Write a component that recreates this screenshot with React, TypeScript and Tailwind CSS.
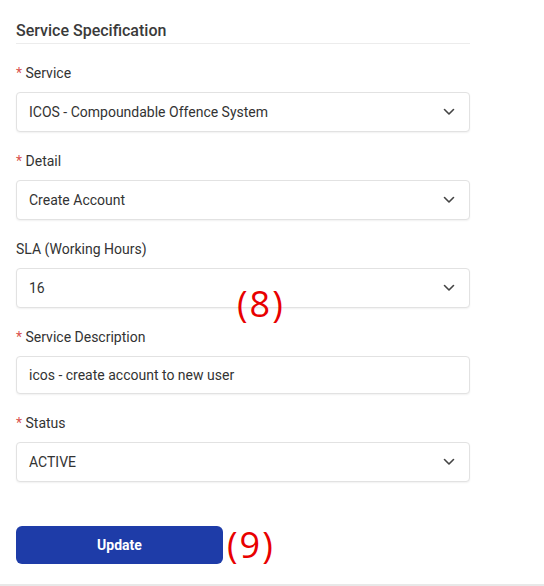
import React from "react";

function Chevron() {
  return (
    <svg width="12" height="8" viewBox="0 0 12 8" fill="none" className="shrink-0">
      <path d="M1.5 1.5L6 6L10.5 1.5" stroke="#444" strokeWidth="1.6" strokeLinecap="round" strokeLinejoin="round" />
    </svg>
  );
}

function Label({ text, required }: { text: string; required?: boolean }) {
  return (
    <div className="h-5 text-[14px] leading-5 text-[#333]">
      {required && <span className="text-[#d9534f]">* </span>}
      {text}
    </div>
  );
}

function SelectBox({ value }: { value: string }) {
  return (
    <div className="mt-[9px] flex h-10 items-center justify-between rounded-[4px] border border-[#e2e2e2] bg-white pl-[12px] pr-[14px] text-[14px] text-[#333] shadow-[0_1px_2px_rgba(0,0,0,0.06)]">
      <span>{value}</span>
      <Chevron />
    </div>
  );
}

export default function App() {
  return (
    <div className="relative h-[586px] w-[544px] bg-white" style={{ fontFamily: "Roboto, 'Noto Sans', sans-serif" }}>
      <div className="w-[470px] pl-4">
        <div className="pt-[21px]">
          <div className="border-b border-[#ececec] pb-[2px] text-[16px] font-medium leading-5 text-[#3a3a3a]">
            Service Specification
          </div>
        </div>
        <div className="pt-[19px]">
          <Label text="Service" required />
          <SelectBox value="ICOS - Compoundable Offence System" />
        </div>
        <div className="pt-[19px]">
          <Label text="Detail" required />
          <SelectBox value="Create Account" />
        </div>
        <div className="pt-[19px]">
          <Label text="SLA (Working Hours)" />
          <SelectBox value="16" />
        </div>
        <div className="pt-[19px]">
          <Label text="Service Description" required />
          <div className="mt-[9px] flex h-[38px] items-center rounded-[4px] border border-[#e2e2e2] bg-white pl-[12px] text-[14px] text-[#333] shadow-[0_1px_2px_rgba(0,0,0,0.06)]">
            icos - create account to new user
          </div>
        </div>
        <div className="pt-[19px]">
          <Label text="Status" required />
          <SelectBox value="ACTIVE" />
        </div>
        <div className="flex items-center pt-[44px]">
          <button className="h-[38px] w-[207px] rounded-[6px] bg-[#1e3ca8] text-[14px] font-bold text-white">
            Update
          </button>
          <span className="ml-[4px] text-[36px] leading-none tracking-[2px] text-[#e80000]" style={{ fontFamily: "'Open Sans', sans-serif" }}>
            (9)
          </span>
        </div>
      </div>
      <span
        className="absolute left-[237px] top-[286px] text-[36px] leading-none tracking-[2px] text-[#e80000]"
        style={{ fontFamily: "'Open Sans', sans-serif" }}
      >
        (8)
      </span>
      <div className="absolute bottom-0 left-0 h-[2px] w-full bg-[#e8e8e8]" />
    </div>
  );
}
